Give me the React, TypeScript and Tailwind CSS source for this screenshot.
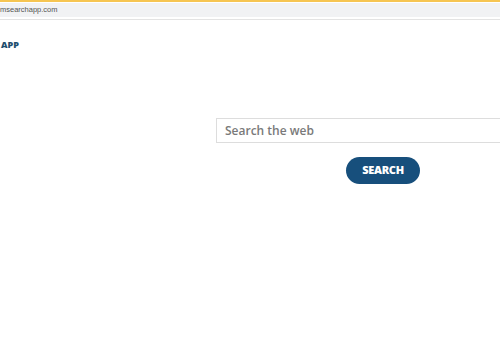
export default function App() {
    return (
        <div className="w-[500px] h-[350px] bg-white overflow-hidden font-['Open_Sans',sans-serif]">
            <div className="h-[2px] bg-[#f6c552]" />
            <div className="h-[1px] bg-white" />
            <div className="h-[14px] bg-[#f1f2f4] flex items-center">
                <span className="text-[7.5px] leading-none text-[#555555] font-['Liberation_Sans',sans-serif]">msearchapp.com</span>
            </div>
            <div className="h-[2px] bg-white" />
            <div className="h-[1px] bg-[#e3e3e3]" />
            <div className="pt-[20px] pl-[1px] h-[98px]">
                <div className="text-[9px] font-extrabold text-[#1d4e6d] leading-none">APP</div>
            </div>
            <div className="flex flex-col pl-[216px]">
                <div className="h-[25px] w-[300px] border border-[#dddddd] flex items-center pl-[8px]">
                    <span className="text-[12px] font-semibold text-[#7a7a7a]">Search the web</span>
                </div>
                <div className="mt-[14px] ml-[130px] w-[74px] h-[27px] rounded-full bg-[#174f7c] flex items-center justify-center">
                    <span className="text-[11px] font-extrabold text-white tracking-tight">SEARCH</span>
                </div>
            </div>
        </div>
    )
}
